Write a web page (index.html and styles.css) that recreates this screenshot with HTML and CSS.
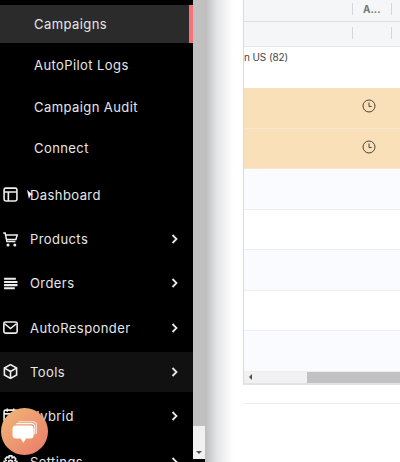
FILE: index.html
```html
<!DOCTYPE html>
<html lang="en">
<head>
    <meta charset="UTF-8">
    <meta name="viewport" content="width=device-width, initial-scale=1.0">
    <title>Campaigns</title>
    <link rel="stylesheet" href="styles.css">
</head>
<body>
    <div class="layout">
        <nav class="sidebar">
            <ul class="sub-menu">
                <li class="sub-item active">Campaigns</li>
                <li class="sub-item">AutoPilot Logs</li>
                <li class="sub-item">Campaign Audit</li>
                <li class="sub-item">Connect</li>
            </ul>
            <ul class="menu">
                <li class="menu-item">
                    <svg class="icon" viewBox="0 0 14 14"><rect x="1" y="1" width="12" height="12" rx="1.5"/><path d="M1 4.600h12M5 4.600V13"/></svg>
                    <span class="label">Dashboard</span>
                    <svg class="pointer" viewBox="0 0 6 9"><path d="M0 0l6 5-2.600.3L2 9z"/></svg>
                </li>
                <li class="menu-item">
                    <svg class="icon" viewBox="0 0 15 15"><path d="M.2 1h2l1.700 8.600h8.500"/><path d="M2.800 3h11.400l-1.300 4.600H3.600"/><circle class="dot" cx="5" cy="13" r="1.500"/><circle class="dot" cx="11.800" cy="13" r="1.500"/></svg>
                    <span class="label">Products</span>
                    <svg class="chevron" viewBox="0 0 7 10"><path d="M1.500 1l4 4-4 4"/></svg>
                </li>
                <li class="menu-item">
                    <svg class="icon" viewBox="0 0 14 14"><path class="thick" d="M1 2.500h11M1 5.500h12.500M1 8.500h12.500M1 11.500h10"/></svg>
                    <span class="label">Orders</span>
                    <svg class="chevron" viewBox="0 0 7 10"><path d="M1.500 1l4 4-4 4"/></svg>
                </li>
                <li class="menu-item">
                    <svg class="icon" viewBox="0 0 14 14"><rect x=".8" y="1.800" width="12.400" height="10.400" rx="1.500"/><path d="M1.500 3.500L7 8l5.500-4.500"/></svg>
                    <span class="label">AutoResponder</span>
                    <svg class="chevron" viewBox="0 0 7 10"><path d="M1.500 1l4 4-4 4"/></svg>
                </li>
                <li class="menu-item hover">
                    <svg class="icon" viewBox="0 0 14 14"><path d="M7 .6l5.700 3.100v6.600L7 13.400l-5.700-3.100V3.700z"/><path d="M1.500 3.800L7 7l5.500-3.200M7 7v6.200"/></svg>
                    <span class="label">Tools</span>
                    <svg class="chevron" viewBox="0 0 7 10"><path d="M1.500 1l4 4-4 4"/></svg>
                </li>
                <li class="menu-item">
                    <svg class="icon" viewBox="0 0 14 14"><rect x="1" y="2" width="12" height="11" rx="1.500"/><path d="M4 .5v3M10 .5v3M1 5.500h12"/></svg>
                    <span class="label">Hybrid</span>
                    <svg class="chevron" viewBox="0 0 7 10"><path d="M1.500 1l4 4-4 4"/></svg>
                </li>
                <li class="menu-item last">
                    <svg class="icon" viewBox="0 0 14 14"><circle cx="7" cy="7" r="2"/><path d="M5.800.8h2.400l.4 1.800 1.700-.7 1.600 1.700-.8 1.600 1.800.6v2.400l-1.800.6.800 1.600-1.600 1.700-1.700-.7-.4 1.800H5.800l-.4-1.800-1.700.7-1.600-1.700.8-1.600L1 8.200V5.800l1.900-.6-.8-1.600 1.600-1.700 1.700.7z"/></svg>
                    <span class="label">Settings</span>
                    <svg class="chevron" viewBox="0 0 7 10"><path d="M1.500 1l4 4-4 4"/></svg>
                </li>
            </ul>
        </nav>

        <div class="scrollbar">
            <div class="scroll-thumb"></div>
            <div class="scroll-track"><span class="arrow-down"></span></div>
        </div>

        <main class="content">
            <div class="table">
                <div class="row head">
                    <div class="cell"></div>
                    <div class="cell"><span class="sep">A...</span></div>
                    <div class="cell"><span class="sep"></span></div>
                </div>
                <div class="row filter">
                    <div class="cell"></div>
                    <div class="cell"><span class="sep"></span></div>
                    <div class="cell"><span class="sep"></span></div>
                </div>
                <div class="row body-row plain"><span class="campaign">n US (82)</span></div>
                <div class="row body-row warn">
                    <div class="cell"></div>
                    <div class="cell"><svg class="clock" viewBox="0 0 14 14"><circle cx="7" cy="7" r="6"/><path d="M7 3.500V7.500h2.600"/></svg></div>
                </div>
                <div class="row body-row warn">
                    <div class="cell"></div>
                    <div class="cell"><svg class="clock" viewBox="0 0 14 14"><circle cx="7" cy="7" r="6"/><path d="M7 3.500V7.500h2.600"/></svg></div>
                </div>
                <div class="row body-row tint"></div>
                <div class="row body-row"></div>
                <div class="row body-row tint"></div>
                <div class="row body-row"></div>
                <div class="row body-row tint"></div>
                <div class="h-scroll">
                    <div class="h-track"><span class="arrow-left"></span></div>
                    <div class="h-thumb"></div>
                </div>
            </div>
            <hr class="divider">
        </main>
    </div>

    <div class="chat-button">
        <svg viewBox="0 0 24 24"><path class="bubble-back" d="M6 2.500h13.500a3 3 0 0 1 3 3v8"/><path class="bubble-mid" d="M4 4.300h14a3 3 0 0 1 3 3v7"/><path d="M3.500 6H17a3 3 0 0 1 3 3v6a3 3 0 0 1-3 3h-4l-2.500 4L8 18H3.500a3 3 0 0 1-3-3V9a3 3 0 0 1 3-3z"/></svg>
    </div>
</body>
</html>
```

FILE: styles.css
```css
* {
    box-sizing: border-box;
}

html, body {
    margin: 0;
    padding: 0;
    height: 100%;
    overflow: hidden;
}

body {
    font-family: Inter, "Open Sans", sans-serif;
    background-color: #fff;
    position: relative;
}

.layout {
    display: flex;
    height: 462px;
    background-color: #000;
}

/* Sidebar */
.sidebar {
    width: 193px;
    flex: none;
    background-color: #000;
    color: #e6e6e6;
    overflow: hidden;
    font-size: 13px;
    letter-spacing: 0.42px;
}

.sidebar ul {
    list-style: none;
    margin: 0;
    padding: 0;
}

.sub-menu {
    display: flex;
    flex-direction: column;
    gap: 3.33px;
    padding-top: 5px !important;
}

.sub-item {
    height: 38px;
    line-height: 38px;
    padding-left: 34px;
}

.sub-item.active {
    background-color: #2b2b2b;
    border-right: 4px solid #f4747a;
}

.menu {
    display: flex;
    flex-direction: column;
    gap: 4.2px;
    margin-top: 8px !important;
}

.menu-item {
    display: flex;
    align-items: center;
    height: 40px;
    flex: none;
    padding-left: 3px;
    position: relative;
}

.menu-item.last {
    margin-top: 2px;
}

.menu-item.hover {
    background-color: #111;
}

.icon {
    width: 15px;
    height: 15px;
    flex: none;
    fill: none;
    stroke: #eee;
    stroke-width: 1.5;
}

.icon .dot {
    fill: #eee;
    stroke: none;
}

.icon .thick {
    stroke-width: 1.9;
}

.label {
    margin-left: 12px;
    flex: 1;
}

.chevron {
    width: 7px;
    height: 10px;
    margin-right: 15px;
    fill: none;
    stroke: #e8e8e8;
    stroke-width: 1.8;
}

.pointer {
    position: absolute;
    left: 27px;
    top: 15px;
    width: 6px;
    height: 9px;
    fill: #f2f2f2;
}

/* Page scrollbar */
.scrollbar {
    width: 12px;
    flex: none;
    height: 459px;
    display: flex;
    flex-direction: column;
    background-color: #f1f1f1;
}

.scroll-thumb {
    height: 426px;
    background-color: #c1c1c1;
}

.scroll-track {
    flex: 1;
    display: flex;
    justify-content: center;
    align-items: flex-end;
    padding-bottom: 5px;
}

.arrow-down {
    border-left: 3px solid transparent;
    border-right: 3px solid transparent;
    border-top: 3px solid #505050;
}

/* Main area */
.content {
    flex: 1;
    min-width: 0;
    padding-left: 38px;
    background: linear-gradient(to right, #bcbcbc, #e4e5e7 12px, #fff 28px);
}

.table {
    border-left: 1px solid #d8dadf;
    border-bottom: 2px solid #e0e2e6;
    height: 385px;
    display: flex;
    flex-direction: column;
}

.row {
    display: grid;
    grid-template-columns: 108px 39px 1fr;
    flex: none;
}

.row.head {
    height: 22px;
    background-color: #f5f6f8;
    border-bottom: 1px solid #dedfe1;
}

.row.filter {
    height: 25px;
    background-color: #f5f6f8;
    border-bottom: 1px solid #e6e7e9;
}

.sep {
    display: block;
    height: 12px;
    margin-top: 3px;
    padding-left: 10px;
    border-left: 1px solid #d6d7da;
    font-size: 10px;
    line-height: 12px;
    font-weight: 700;
    color: #777;
}

.filter .sep {
    margin-top: 5px;
}

.body-row {
    height: 40.5px;
    border-bottom: 1px solid #eceef2;
}

.plain {
    display: block;
    height: 41px;
    border-bottom: none;
}

.campaign {
    display: block;
    padding: 4px 0 0 0;
    font-size: 10px;
    letter-spacing: -0.1px;
    color: #444;
}

.warn {
    background-color: #fae0b8;
    border-bottom-color: #f6e6d2;
}

.tint {
    background-color: #fafbfe;
}

.warn .cell {
    display: flex;
    align-items: center;
    padding: 0 0 3px 10px;
}

.clock {
    width: 14px;
    height: 14px;
    fill: none;
    stroke: #4a4238;
    stroke-width: 1;
}

.h-scroll {
    flex: 1;
    display: flex;
}

.h-track {
    width: 63px;
    flex: none;
    background-color: #f1f1f1;
    display: flex;
    align-items: center;
    padding-left: 5px;
}

.arrow-left {
    border-top: 3px solid transparent;
    border-bottom: 3px solid transparent;
    border-right: 3px solid #505050;
}

.h-thumb {
    flex: 1;
    background-color: #c1c1c1;
}

.divider {
    border: none;
    border-top: 1px solid #ececec;
    margin: 18px 0 0 1px;
}

/* Chat launcher */
.chat-button {
    position: absolute;
    left: 1px;
    top: 408px;
    width: 47px;
    height: 47px;
    border-radius: 50%;
    background: linear-gradient(135deg, #f0b878, #ea7a68);
    display: flex;
    align-items: center;
    justify-content: center;
}

.chat-button svg {
    width: 26px;
    height: 26px;
    fill: #fff;
}

.chat-button .bubble-back {
    fill: none;
    stroke: #fff;
    stroke-opacity: 0.75;
    stroke-width: 1;
}

.chat-button .bubble-mid {
    fill: none;
    stroke: #fff;
    stroke-opacity: 0.9;
    stroke-width: 1;
}
```
